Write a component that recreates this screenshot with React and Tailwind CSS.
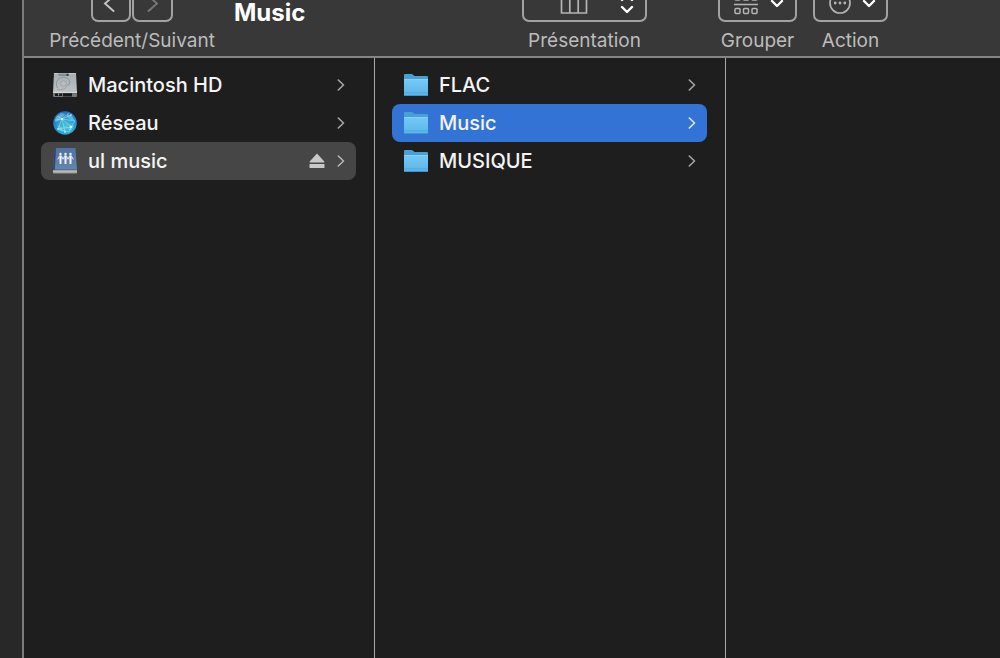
import { useState } from "react"

const DriveIcon = () => (
  <svg viewBox="0 0 24 26" className="h-[26px] w-6 shrink-0" aria-hidden="true">
    <defs>
      <linearGradient id="drive-top" x1="0" y1="0" x2="0" y2="1">
        <stop offset="0" stopColor="#a6aeb2" />
        <stop offset="1" stopColor="#bcc2c6" />
      </linearGradient>
    </defs>
    <path d="M1 1h22l1 19.500H0z" fill="url(#drive-top)" />
    <path d="M1 1h22v.8H1z" fill="#c9cfd2" />
    <path d="M5 1.500h11v2.500H6z" fill="#878d90" />
    <rect x="13.500" y="1.800" width="2" height="2.200" fill="#45484a" />
    <path d="M4.500 16a7 7 0 1 1 12.500-6q0 3-3 3.500" fill="none" stroke="#8f979c" strokeWidth="1" />
    <circle cx="10.500" cy="11.500" r="2.800" fill="#b9bfc3" stroke="#949ba0" strokeWidth=".8" />
    <path d="M14 13.500c-1 3.500-5 4.500-10 4" fill="none" stroke="#989fa4" strokeWidth=".9" />
    <path d="M0 19.800h24v1.400H0z" fill="#d5d9db" />
    <path d="M0 21.200h24V24q0 1-1 1H1q-1 0-1-1z" fill="#74787a" />
    <path d="M2 21.500h7V24H2zM10 21.200h9V24.500h-9z" fill="#191a1b" />
    <path d="M5 21.500h1.200v2H5z" fill="#9a9a9a" />
  </svg>
)

const NetworkIcon = () => (
  <svg viewBox="0 0 24 24" className="size-6 shrink-0" aria-hidden="true">
    <defs>
      <radialGradient id="globe" cx=".55" cy=".65" r=".6">
        <stop offset="0" stopColor="#4cc6de" />
        <stop offset=".6" stopColor="#2d9dd2" />
        <stop offset="1" stopColor="#2470c4" />
      </radialGradient>
    </defs>
    <circle cx="12" cy="12" r="11.800" fill="url(#globe)" />
    <path d="M3 6l5-4 4 1-2 3-4 4-4 1zM14 3l5 2 3 5-4-1-4-3zM5 14l4 2 1 5-4-2zM17 13l4 2-3 5-3-2z" fill="#7bdce6" opacity=".55" />
    <g fill="none" stroke="#b9f3f5" strokeWidth=".7" opacity=".65">
      <path d="M2 9l7-1 9-4M9 8l9 8M9 8L5 18l11 3 2-5 4-6M9 8l7-6M4 5l5 3 13 2M5 18l13-2M12 21L9 8" />
    </g>
    <g fill="#e2ffff">
      <circle cx="9" cy="8" r="1" />
      <circle cx="18" cy="16" r="1" />
      <circle cx="5" cy="18" r=".8" />
      <circle cx="18" cy="4" r=".8" />
      <circle cx="12" cy="21" r=".8" />
    </g>
  </svg>
)

const ServerIcon = () => (
  <svg viewBox="0 0 24 26" className="h-[26px] w-6 shrink-0" aria-hidden="true">
    <defs>
      <linearGradient id="server-top" x1="0" y1="0" x2="0" y2="1">
        <stop offset="0" stopColor="#4f72a3" />
        <stop offset="1" stopColor="#6685b0" />
      </linearGradient>
    </defs>
    <path d="M1.500 0h21L24 22H0z" fill="url(#server-top)" />
    <path d="M1.500 0H3L1.800 22H0z" fill="#2c4569" />
    <path d="M0 22h24v2.500q0 .8-.8.800H.8q-.8 0-.8-.8z" fill="#bdbab2" />
    <path d="M0 21.500h24v.8H0z" fill="#45618a" />
    <path d="M0 24.700h24q0 .8-.8.800H.8q-.8 0-.8-.8z" fill="#77756f" />
    <circle cx="21.500" cy="23.700" r=".8" fill="#8fd05c" />
    <g fill="#f1f4f8">
      <circle cx="7.500" cy="6" r="1.200" />
      <circle cx="12.500" cy="6" r="1.200" />
      <circle cx="17.500" cy="6" r="1.200" />
      <path d="M6.300 7.500h2.400l-.3 8.500H6.600zM11.300 7.500h2.400l-.3 8.500h-1.800zM16.300 7.500h2.400l-.3 8.500h-1.800z" />
    </g>
    <path d="M6.500 8.200l-1.900 3.300M8.500 8.200l1.500 3 1.500-3M13.500 8.200l1.500 3 1.500-3M18.500 8.200l1.900 3.300" fill="none" stroke="#e4eaf2" strokeWidth="1" />
  </svg>
)

const FolderIcon = () => (
  <svg viewBox="0 0 24 24" className="size-6 shrink-0" aria-hidden="true">
    <defs>
      <linearGradient id="folder-front" x1="0" y1="0" x2="0" y2="1">
        <stop offset="0" stopColor="#76c9f6" />
        <stop offset="1" stopColor="#59b5e8" />
      </linearGradient>
    </defs>
    <path d="M0 2q0-1 1-1h6.500q.8 0 1.400.6L10.500 3H23q1 0 1 1v4H0z" fill="#4a9fd3" />
    <path d="M0 6h24v16q0 1-1 1H1q-1 0-1-1z" fill="url(#folder-front)" />
    <path d="M0 6h24v.8H0z" fill="#8ad5f9" />
    <path d="M0 19.500h24v.8H0z" fill="#4ba6d9" />
    <path d="M0 22.200h24q0 .8-1 .8H1q-1 0-1-.8z" fill="#368abd" />
  </svg>
)

const Chevron = ({ className }) => (
  <svg viewBox="0 0 8 12" className={`h-3 w-2 shrink-0 ${className}`} aria-hidden="true">
    <path d="M1.300 1l5.200 5-5.200 5" fill="none" stroke="currentColor" strokeWidth="1.600" strokeLinecap="round" strokeLinejoin="round" />
  </svg>
)

const DownArrow = () => (
  <svg viewBox="0 0 14 10" className="h-[10px] w-[14px]" aria-hidden="true">
    <path d="M2 2l5 5 5-5" fill="none" stroke="#fff" strokeWidth="2.400" strokeLinecap="round" strokeLinejoin="round" />
  </svg>
)

const locations = [
  { name: "Macintosh HD", Icon: DriveIcon },
  { name: "Réseau", Icon: NetworkIcon },
  { name: "ul music", Icon: ServerIcon, ejectable: true },
]

const folders = [
  { name: "FLAC", Icon: FolderIcon },
  { name: "Music", Icon: FolderIcon },
  { name: "MUSIQUE", Icon: FolderIcon },
]

const Column = ({ label, items, selected, onSelect, selectedClass, arrowClass }) => (
  <ul aria-label={label} className="min-w-0 shrink basis-[351px] border-r border-[#a8a8a8] pt-2 pr-[18px] pl-[17px]">
    {items.map(({ name, Icon, ejectable }) => (
      <li
        key={name}
        className={`flex h-[38px] items-center rounded-lg pr-[11px] ${selected === name ? selectedClass : ""}`}
      >
        <button
          type="button"
          onClick={() => onSelect(name)}
          className="flex h-full min-w-0 flex-1 items-center gap-[11px] pl-3 text-left text-[20px] font-medium whitespace-nowrap text-[#f4f4f4]"
        >
          <Icon />
          {name}
        </button>
        {ejectable && (
          <button type="button" aria-label={`Éjecter ${name}`} className="mr-3 shrink-0">
            <svg viewBox="0 0 16 16" className="size-4" aria-hidden="true">
              <path d="M8 .5l7.300 8q.5 1-.6 1H1.300q-1.100 0-.6-1zM1 11h14q.5 0 .5.500v3q0 .5-.5.500H1q-.5 0-.5-.5v-3q0-.5.5-.5z" fill="#c8c8c8" />
            </svg>
          </button>
        )}
        <Chevron className={selected === name ? arrowClass : "text-[#a6a6a6]"} />
      </li>
    ))}
  </ul>
)

const toolButton = "flex h-9 items-center justify-center rounded-[7px] border-2 border-[#a2a2a2]"
const toolLabel = "text-[19px] leading-6 whitespace-nowrap text-[#bcbcbc]"

const Toolbar = () => (
  <header className="flex h-[58px] items-end overflow-hidden border-b-2 border-[#858585] bg-[#383838] pr-28 pb-[3px] pl-[26px]">
    <div className="flex w-[164px] shrink-0 flex-col items-center gap-[7px]">
      <div className="flex gap-px">
        <button type="button" aria-label="Précédent" className={`${toolButton} w-10 pr-1`}>
          <svg viewBox="0 0 12 18" className="h-[18px] w-3" aria-hidden="true">
            <path d="M10.500 1L2 8.500l8.500 7.500" fill="none" stroke="#c4c4c4" strokeWidth="1.900" strokeLinecap="round" />
          </svg>
        </button>
        <button type="button" aria-label="Suivant" className={`${toolButton} w-[41px]`}>
          <svg viewBox="0 0 12 18" className="h-[18px] w-3" aria-hidden="true">
            <path d="M1.500 1L10 8.500 1.500 16" fill="none" stroke="#777" strokeWidth="1.900" strokeLinecap="round" />
          </svg>
        </button>
      </div>
      <span className={toolLabel}>Précédent/Suivant</span>
    </div>
    <h1 className="mb-7 ml-5 flex-1 text-[24px] leading-6 font-bold text-white">Music</h1>
    <div className="flex shrink-0 flex-col items-center gap-[7px]">
      <button type="button" aria-labelledby="view-label" className={`${toolButton} w-[125px] gap-[32px] pl-6`}>
        <svg viewBox="0 0 28 22" className="h-[22px] w-7" aria-hidden="true">
          <path d="M1.500 1h25v19h-25zM9.800 1v19M18.200 1v19" fill="none" stroke="#b4b4b4" strokeWidth="1.700" strokeLinejoin="round" />
        </svg>
        <svg viewBox="0 0 14 22" className="h-[22px] w-[14px]" aria-hidden="true">
          <path d="M2 7l5-5 5 5M2 14l5 5 5-5" fill="none" stroke="#fff" strokeWidth="2.400" strokeLinecap="round" strokeLinejoin="round" />
        </svg>
      </button>
      <span id="view-label" className={toolLabel}>Présentation</span>
    </div>
    <div className="ml-[71px] flex w-[79px] shrink-0 flex-col items-center gap-[7px]">
      <button type="button" aria-labelledby="group-label" className={`${toolButton} w-full gap-[11px] pl-[2px]`}>
        <svg viewBox="0 0 26 24" className="h-6 w-[26px]" aria-hidden="true">
          <g fill="none" stroke="#b4b4b4" strokeWidth="1.500">
            <path d="M1 12.500h24" />
            <rect x="2" y="3" width="5" height="5" rx="1" />
            <rect x="10.500" y="3" width="5" height="5" rx="1" />
            <rect x="19" y="3" width="5" height="5" rx="1" />
            <rect x="2" y="16.500" width="5" height="5" rx="1" />
            <rect x="10.500" y="16.500" width="5" height="5" rx="1" />
            <rect x="19" y="16.500" width="5" height="5" rx="1" />
          </g>
        </svg>
        <DownArrow />
      </button>
      <span id="group-label" className={toolLabel}>Grouper</span>
    </div>
    <div className="ml-4 flex w-[75px] shrink-0 flex-col items-center gap-[7px]">
      <button type="button" aria-labelledby="action-label" className={`${toolButton} w-full gap-[10px] pl-[3px]`}>
        <svg viewBox="0 0 24 24" className="size-6" aria-hidden="true">
          <circle cx="12" cy="11" r="10" fill="none" stroke="#b4b4b4" strokeWidth="1.700" />
          <g fill="#b4b4b4">
            <circle cx="7.200" cy="11" r="1.400" />
            <circle cx="12" cy="11" r="1.400" />
            <circle cx="16.800" cy="11" r="1.400" />
          </g>
        </svg>
        <DownArrow />
      </button>
      <span id="action-label" className={toolLabel}>Action</span>
    </div>
  </header>
)

export default function App() {
  const [location, setLocation] = useState("ul music")
  const [folder, setFolder] = useState("Music")

  return (
    <div className="flex min-h-screen bg-[#282828] pl-[22px] font-['Inter',sans-serif]">
      <div className="flex min-w-0 flex-1 flex-col border-l-2 border-[#7c7c7c] bg-[#1e1e1e]">
        <Toolbar />
        <main className="flex flex-1">
          <Column
            label="Emplacements"
            items={locations}
            selected={location}
            onSelect={setLocation}
            selectedClass="bg-[#464646]"
            arrowClass="text-[#b4b4b4]"
          />
          <Column
            label="Dossiers"
            items={folders}
            selected={folder}
            onSelect={setFolder}
            selectedClass="bg-[#3273d5]"
            arrowClass="text-[#e0eaf8]"
          />
        </main>
      </div>
    </div>
  )
}
